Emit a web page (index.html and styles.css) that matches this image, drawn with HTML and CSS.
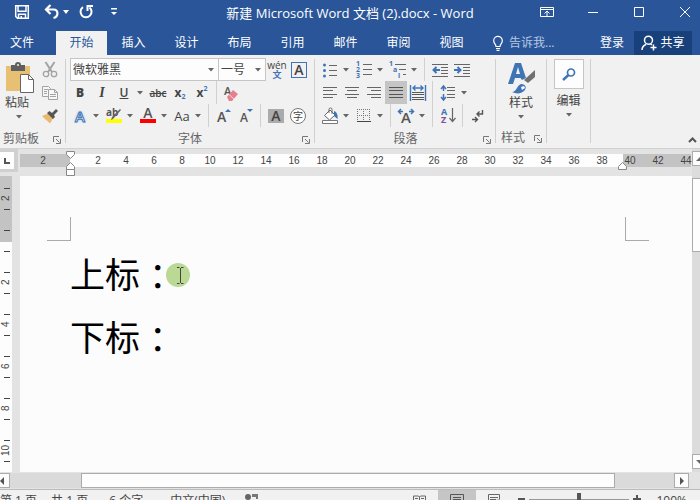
FILE: index.html
```html
<!DOCTYPE html>
<html lang="zh-CN">
<head>
    <meta charset="UTF-8">
    <meta name="viewport" content="width=device-width, initial-scale=1.0">
    <title>新建 Microsoft Word 文档 (2).docx - Word</title>
    <link rel="stylesheet" href="styles.css">
</head>
<body>
    <div class="app">
        <header class="titlebar">
            <div class="quick-access">
                <button class="qat save" aria-label="保存"><svg width="16" height="16" viewBox="0 0 16 16"><path d="M1.700 1.700h12.600v12.600H3.500l-1.800-1.800z M4 1.700v5.500h8V1.700 M4.500 14.300v-4h7v4 M7.200 12v2" fill="none" stroke="#fff" stroke-width="1.500"/></svg></button>
                <button class="qat undo" aria-label="撤消"><svg width="16" height="16" viewBox="0 0 16 16"><path d="M6.500 1L2 5.500 6.500 10M2 5.500h7.500c5 0 5.500 7 0 8.500" fill="none" stroke="#fff" stroke-width="2.200"/></svg></button>
                <button class="qat qat-caret" aria-label="撤消列表"><svg width="6" height="4"><path d="M0 0h6L3 4z" fill="#fff"/></svg></button>
                <button class="qat redo" aria-label="重复"><svg width="16" height="16" viewBox="0 0 16 16"><path d="M5 3.200A5.500 5.500 0 1 0 11.500 3.500M9.500 7V2H15" fill="none" stroke="#fff" stroke-width="2"/></svg></button>
                <button class="qat more" aria-label="自定义快速访问工具栏"><svg width="6" height="8"><path d="M0 0h6v1.500H0zM0 4h6L3 7z" fill="#fff"/></svg></button>
            </div>
            <h1>新建 Microsoft Word 文档 (2).docx - Word</h1>
            <div class="window-buttons">
                <button aria-label="功能区显示选项"><svg width="14" height="10"><path d="M.5.5h13v9H.5zM.5 2.500h13M7 9V4M4.500 6.500L7 4l2.500 2.500" fill="none" stroke="#fff"/></svg></button>
                <button aria-label="最小化"><svg width="10" height="10"><path d="M0 5.500h10" stroke="#fff"/></svg></button>
                <button aria-label="最大化"><svg width="10" height="10"><path d="M.5.5h9v9h-9z" fill="none" stroke="#fff"/></svg></button>
                <button aria-label="关闭"><svg width="10" height="10"><path d="M0 0l10 10M10 0L0 10" stroke="#fff"/></svg></button>
            </div>
        </header>

        <nav class="tabs">
            <button class="tab file">文件</button>
            <button class="tab active">开始</button>
            <button class="tab">插入</button>
            <button class="tab">设计</button>
            <button class="tab">布局</button>
            <button class="tab">引用</button>
            <button class="tab">邮件</button>
            <button class="tab">审阅</button>
            <button class="tab">视图</button>
            <button class="tell-me"><svg width="10" height="15" viewBox="0 0 10 15"><path d="M3 10.500C3 8 .7 7.500.7 4.700a4.300 4.300 0 0 1 8.600 0C9.300 7.500 7 8 7 10.500zM3 12.500h4M3.500 14.300h3" fill="none" stroke="#fff" stroke-width="1.200"/></svg>告诉我...</button>
            <button class="login">登录</button>
            <button class="share"><svg width="16" height="16" viewBox="0 0 16 16"><path d="M1 15c0-3 1.500-4.500 4-5.500M7.500 1.200a4 4 0 1 1 0 8 4 4 0 0 1 0-8zM9.500 9l1.500 1M12.500 9.500v6M9.500 12.500h6" fill="none" stroke="#fff" stroke-width="1.500"/></svg>共享</button>
        </nav>

        <section class="ribbon">
            <div class="group clipboard">
                <div class="group-body">
                    <button class="big">
                        <svg width="30" height="32" viewBox="0 0 30 32"><path d="M1 4h24v25H1z" fill="#e8c074"/><path d="M6 3h4a3 3 0 0 1 6 0h4v6H6z" fill="#5f5f5f"/><circle cx="13" cy="3" r="1" fill="#f1f1f1"/><path d="M15.500 12.500h8l5 5v13h-13z" fill="#fff" stroke="#666"/><path d="M23.500 12.500v5h5" fill="none" stroke="#666"/></svg>
                        <span>粘贴</span>
                        <svg class="arrow" width="6" height="4"><path d="M0 0h6L3 3.500z"/></svg>
                    </button>
                    <div class="stack">
                        <button class="tool" aria-label="剪切"><svg width="16" height="16" viewBox="0 0 16 16"><path d="M3.500 0L10 10M12.500 0L6 10" stroke="#a3a3a3" stroke-width="2"/><circle cx="4" cy="12" r="2.700" fill="none" stroke="#a3a3a3" stroke-width="1.300"/><circle cx="12" cy="12" r="2.700" fill="none" stroke="#a3a3a3" stroke-width="1.300"/></svg></button>
                        <button class="tool" aria-label="复制"><svg width="16" height="16" viewBox="0 0 16 16"><path d="M.5 1.500h6l2 2v8h-8z" fill="#f7f7f7" stroke="#a3a3a3"/><path d="M2 4.500h4M2 6.500h3M2 8.500h3" stroke="#a3a3a3"/><path d="M6.500 4.500h6l3 3v7h-9z" fill="#f7f7f7" stroke="#a3a3a3"/><path d="M12.500 4.500v3h3M8 9.500h6M8 11.500h6" fill="none" stroke="#a3a3a3"/></svg></button>
                        <button class="tool" aria-label="格式刷"><svg width="16" height="16" viewBox="0 0 16 16"><path d="M0 8l6-2.500 5 5L8 15.500 5.500 13 4 12z" fill="#e9b96e"/><path d="M5 5l2.500-2 2.500 2 4-4 2 2-4 4 1 2-2 2z" fill="#555"/></svg></button>
                    </div>
                </div>
                <div class="group-name"><span>剪贴板</span><button class="launcher" aria-label="剪贴板设置"><svg width="8" height="8"><path d="M.5 6V.5H6M3 3l3.500 3.500M7.500 3v4.500H3" fill="none" stroke="#777"/></svg></button></div>
            </div>
            <div class="line"></div>

            <div class="group font">
                <div class="row">
                    <div class="combo name">
                        <select aria-label="字体"><option>微软雅黑</option></select>
                        <svg class="arrow" width="6" height="4"><path d="M0 0h6L3 3.500z"/></svg>
                    </div>
                    <div class="combo size">
                        <select aria-label="字号"><option>一号</option></select>
                        <svg class="arrow" width="6" height="4"><path d="M0 0h6L3 3.500z"/></svg>
                    </div>
                    <button class="tool pinyin"><span>wén</span><b>文</b></button>
                    <button class="tool" aria-label="字符边框"><span class="boxed">A</span></button>
                </div>
                <div class="row">
                    <button class="tool"><b>B</b></button>
                    <button class="tool italic">I</button>
                    <button class="tool underline">U</button>
                    <button class="drop" aria-label="下划线样式"><svg class="arrow" width="6" height="4"><path d="M0 0h6L3 3.500z"/></svg></button>
                    <button class="tool strike">abc</button>
                    <button class="tool script">x<sub>2</sub></button>
                    <button class="tool script">x<sup>2</sup></button>
                    <i class="sep"></i>
                    <button class="tool" aria-label="清除格式"><svg width="16" height="16" viewBox="0 0 16 16"><text x="0" y="10" font-size="11" fill="#555">A</text><path d="M3 12l6-7 5 4-6 7H5z" fill="#e6808c"/><path d="M5 9.500l5 4.500" stroke="#f6d5d9"/></svg></button>
                </div>
                <div class="row">
                    <button class="tool" aria-label="文本效果"><span class="glow">A</span></button>
                    <button class="drop" aria-label="文本效果列表"><svg class="arrow" width="6" height="4"><path d="M0 0h6L3 3.500z"/></svg></button>
                    <button class="tool" aria-label="突出显示"><svg width="18" height="17" viewBox="0 0 18 17"><path d="M1 12h16v4H1z" fill="#ff0"/><text x="1" y="9" font-size="10" font-weight="bold" fill="#555">ab</text><path d="M16 3L8 12l-2 1 1-3 8-8z" fill="#666"/></svg></button>
                    <button class="drop" aria-label="突出显示颜色"><svg class="arrow" width="6" height="4"><path d="M0 0h6L3 3.500z"/></svg></button>
                    <button class="tool" aria-label="字体颜色"><svg width="16" height="17" viewBox="0 0 16 17"><path d="M0 12h16v4H0z" fill="#f00"/><text x="8" y="11" font-size="14" font-weight="600" text-anchor="middle" fill="#555">A</text></svg></button>
                    <button class="drop" aria-label="更多颜色"><svg class="arrow" width="6" height="4"><path d="M0 0h6L3 3.500z"/></svg></button>
                    <button class="tool case">Aa</button>
                    <button class="drop" aria-label="更改大小写"><svg class="arrow" width="6" height="4"><path d="M0 0h6L3 3.500z"/></svg></button>
                    <i class="sep"></i>
                    <button class="tool" aria-label="增大字号"><svg width="16" height="16" viewBox="0 0 16 16"><text x="1" y="14" font-size="14" font-weight="600" fill="#555">A</text><path d="M9 4l3-3 3 3z" fill="#3f74b5"/></svg></button>
                    <button class="tool" aria-label="减小字号"><svg width="16" height="16" viewBox="0 0 16 16"><text x="2" y="14" font-size="12" font-weight="600" fill="#555">A</text><path d="M9 1h6l-3 3z" fill="#3f74b5"/></svg></button>
                    <i class="sep"></i>
                    <button class="tool" aria-label="字符底纹"><span class="shaded">A</span></button>
                    <button class="tool" aria-label="带圈字符"><span class="ring">字</span></button>
                </div>
                <div class="group-name"><span>字体</span><button class="launcher" aria-label="字体设置"><svg width="8" height="8"><path d="M.5 6V.5H6M3 3l3.500 3.500M7.500 3v4.500H3" fill="none" stroke="#777"/></svg></button></div>
            </div>
            <div class="line"></div>

            <div class="group paragraph">
                <div class="row">
                    <button class="tool" aria-label="项目符号"><svg width="14" height="16"><path d="M6 3.500h8M6 8.500h8M6 13.500h8" stroke="#666"/><g fill="#3f74b5"><circle cx="1.500" cy="3" r="1.500"/><circle cx="1.500" cy="8.500" r="1.500"/><circle cx="1.500" cy="14" r="1.500"/></g></svg></button>
                    <button class="drop" aria-label="项目符号库"><svg class="arrow" width="6" height="4"><path d="M0 0h6L3 3.500z"/></svg></button>
                    <button class="tool" aria-label="编号"><svg width="16" height="17"><path d="M7 3.500h9M7 8.500h9M7 13.500h9" stroke="#666"/><g font-size="7" font-weight="bold" fill="#3f74b5"><text y="5">1</text><text y="11">2</text><text y="17">3</text></g></svg></button>
                    <button class="drop" aria-label="编号库"><svg class="arrow" width="6" height="4"><path d="M0 0h6L3 3.500z"/></svg></button>
                    <button class="tool" aria-label="多级列表"><svg width="18" height="17"><path d="M6 3.500h11M10 8.500h7M14 13.500h3" stroke="#666"/><g font-size="7" font-weight="bold" fill="#3f74b5"><text x="0" y="5">1</text><text x="4" y="11">a</text><text x="9" y="17">i</text></g></svg></button>
                    <button class="drop" aria-label="列表库"><svg class="arrow" width="6" height="4"><path d="M0 0h6L3 3.500z"/></svg></button>
                    <i class="sep"></i>
                    <button class="tool" aria-label="减少缩进量"><svg width="16" height="14"><path d="M0 1.500h16M9 4.500h7M9 7.500h7M9 10.500h7M0 13.500h16" stroke="#666"/><path d="M8 7H2M4.500 4L1.500 7l3 3" fill="none" stroke="#3f74b5" stroke-width="2"/></svg></button>
                    <button class="tool" aria-label="增加缩进量"><svg width="16" height="14"><path d="M0 1.500h16M9 4.500h7M9 7.500h7M9 10.500h7M0 13.500h16" stroke="#666"/><path d="M0 7h6M3.500 4l3 3-3 3" fill="none" stroke="#3f74b5" stroke-width="2"/></svg></button>
                </div>
                <div class="row">
                    <button class="tool" aria-label="左对齐"><svg width="14" height="11"><path d="M0 .5h14M0 3.500h10M0 7.500h14M0 10.500h10" stroke="#666"/></svg></button>
                    <button class="tool" aria-label="居中"><svg width="14" height="11"><path d="M0 .5h14M2 3.500h10M0 7.500h14M2 10.500h10" stroke="#666"/></svg></button>
                    <button class="tool" aria-label="右对齐"><svg width="14" height="11"><path d="M0 .5h14M4 3.500h10M0 7.500h14M4 10.500h10" stroke="#666"/></svg></button>
                    <button class="tool pressed" aria-label="两端对齐"><svg width="14" height="11"><path d="M0 .5h14M0 3.500h14M0 7.500h14M0 10.500h14" stroke="#555"/></svg></button>
                    <button class="tool" aria-label="分散对齐"><svg width="16" height="16"><path d="M.5 0v16M15.500 0v16M3 3h10M5.500.5L3 3l2.500 2.500M10.500.5L13 3l-2.500 2.500" fill="none" stroke="#3f74b5" stroke-width="1.400"/><path d="M2 7.500h12M2 9.500h12M2 12.500h12M2 14.500h12" stroke="#555"/></svg></button>
                    <i class="sep"></i>
                    <button class="tool" aria-label="行距"><svg width="15" height="16"><path d="M6 2.500h8M6 5.500h8M6 9.500h8M6 12.500h8" stroke="#666"/><path d="M2.500 1v5M0 4l2.500-3L5 4M2.500 9v6M0 12l2.500 3L5 12" fill="none" stroke="#3f74b5" stroke-width="1.500"/></svg></button>
                    <button class="drop" aria-label="行距选项"><svg class="arrow" width="6" height="4"><path d="M0 0h6L3 3.500z"/></svg></button>
                </div>
                <div class="row">
                    <button class="tool" aria-label="底纹"><svg width="16" height="16"><path d="M2.500 7.500L8 2l5 5-5.500 5zM7 5V1.500a1.500 1.500 0 0 1 3 0V6" fill="#fff" stroke="#666"/><path d="M12 3c3 1 4 4 3.500 8L12 8z" fill="#3f74b5"/><path d="M.5 12.500h15v3H.5z" fill="#fff" stroke="#777"/></svg></button>
                    <button class="drop" aria-label="底纹颜色"><svg class="arrow" width="6" height="4"><path d="M0 0h6L3 3.500z"/></svg></button>
                    <button class="tool" aria-label="边框"><svg width="14" height="14"><path d="M0 .5h14M0 6.500h14M.5 0v13M6.500 0v13M12.500 0v13" stroke="#777" stroke-dasharray="1 1"/><path d="M0 12.500h14" stroke="#444"/></svg></button>
                    <button class="drop" aria-label="边框选项"><svg class="arrow" width="6" height="4"><path d="M0 0h6L3 3.500z"/></svg></button>
                    <i class="sep"></i>
                    <button class="tool" aria-label="中文版式"><svg width="18" height="16"><text x="9" y="15" font-size="15" font-weight="600" text-anchor="middle" fill="#555">A</text><path d="M6 3.500H2M4 1L1.500 3.500 4 6M12 3.500h4M14 1l2.500 2.500L14 6" fill="none" stroke="#3f74b5" stroke-width="1.500"/></svg></button>
                    <button class="drop" aria-label="中文版式选项"><svg class="arrow" width="6" height="4"><path d="M0 0h6L3 3.500z"/></svg></button>
                    <i class="sep"></i>
                    <button class="tool" aria-label="排序"><svg width="15" height="17"><g font-size="9" font-weight="bold"><text y="8" fill="#3f74b5">A</text><text y="16" fill="#80519e">Z</text></g><path d="M11.500 1v13M8.500 11l3 3.500 3-3.500" fill="none" stroke="#666" stroke-width="1.200"/></svg></button>
                    <i class="sep"></i>
                    <button class="tool" aria-label="显示编辑标记"><svg width="12" height="14"><path d="M10.500 1v4H5M7.500 2.500L5 5l2.500 2.500M0 10.500h5M3 8l2.500 2.500L3 13" fill="none" stroke="#555" stroke-width="1.400"/></svg></button>
                </div>
                <div class="group-name"><span>段落</span><button class="launcher" aria-label="段落设置"><svg width="8" height="8"><path d="M.5 6V.5H6M3 3l3.500 3.500M7.500 3v4.500H3" fill="none" stroke="#777"/></svg></button></div>
            </div>
            <div class="line"></div>

            <div class="group styles">
                <div class="group-body">
                    <button class="big">
                        <svg width="30" height="32" viewBox="0 0 30 32"><path d="M2 22L9 1h6l5 15-4 2-1.500-2H9l-2 6zM10 12h4L12 5z" fill="#3f74b5" fill-rule="evenodd"/><path d="M29 8v7l-7 6-4-3z" fill="#707070"/><path d="M6 30c5 0 5-8 10-8 4 1 5 4 2 7-3 3-8 3-12 1z" fill="#3f74b5"/><path d="M15 25l3-1 1 2-3 2z" fill="#fff"/></svg>
                        <span>样式</span>
                        <svg class="arrow" width="6" height="4"><path d="M0 0h6L3 3.500z"/></svg>
                    </button>
                </div>
                <div class="group-name"><span>样式</span><button class="launcher" aria-label="样式设置"><svg width="8" height="8"><path d="M.5 6V.5H6M3 3l3.500 3.500M7.500 3v4.500H3" fill="none" stroke="#777"/></svg></button></div>
            </div>
            <div class="line"></div>

            <div class="group editing">
                <button class="big">
                    <span class="find"><svg width="14" height="13"><circle cx="9" cy="4.500" r="3.500" fill="none" stroke="#3f74b5" stroke-width="1.700"/><path d="M6.500 7L1 12" stroke="#3f74b5" stroke-width="2.400"/></svg></span>
                    <span>编辑</span>
                    <svg class="arrow" width="6" height="4"><path d="M0 0h6L3 3.500z"/></svg>
                </button>
            </div>
            <div class="line"></div>
            <button class="collapse" aria-label="折叠功能区"><svg width="9" height="6"><path d="M1 5l3.500-3.500L8 5" fill="none" stroke="#555" stroke-width="2"/></svg></button>
        </section>

        <div class="workspace">
            <div class="corner"><button aria-label="制表符"><svg width="6" height="6"><path d="M1 0v5h5" fill="none" stroke="#555" stroke-width="2"/></svg></button></div>
            <div class="ruler">
                <div class="outside left"><span>2</span></div>
                <div class="inside">
                    <span>2</span><span>4</span><span>6</span><span>8</span><span>10</span><span>12</span><span>14</span><span>16</span><span>18</span><span>20</span><span>22</span><span>24</span><span>26</span><span>28</span><span>30</span><span>32</span><span>34</span><span>36</span><span>38</span>
                    <svg class="indent first" width="9" height="25"><path d="M.5.5h8v3l-4 4-4-4zM4.500 11.500l4 4v3h-8v-3zM.5 18.500h8v6h-8z" fill="#fff" stroke="#888"/></svg>
                    <svg class="indent last" width="9" height="8"><path d="M4.500.5l4 4v3h-8v-3z" fill="#fff" stroke="#888"/></svg>
                </div>
                <div class="outside right"><span>40</span><span>42</span><span>44</span></div>
            </div>
            <div class="vruler">
                <div class="margin"><span>2</span><span></span><span></span></div>
                <div class="body"><span></span><span>2</span><span></span><span>4</span><span></span><span>6</span><span></span><span>8</span><span></span><span>10</span><span></span></div>
            </div>
            <main class="page">
                <div class="marks"><i class="mark-left"></i><i class="mark-right"></i></div>
                <div class="text">
                    <p>上标<span class="colon">：</span></p>
                    <p>下标<span class="colon">：</span></p>
                </div>
                <svg class="pointer" width="24" height="24"><circle cx="12" cy="12" r="12" fill="#b9d995"/><path d="M11 4.500h2.500M15 4.500h2.500M14.500 5v15M11 20.500h2.500M15 20.500h2.500" fill="none" stroke="#444"/></svg>
            </main>
            <div class="vscroll">
                <button aria-label="向上滚动"><svg width="8" height="4"><path d="M0 4l4-4 4 4z" fill="#666"/></svg></button>
                <div class="vtrack"><div class="thumb"></div></div>
                <button class="down" aria-label="向下滚动"><svg width="8" height="4"><path d="M0 0h8L4 4z" fill="#666"/></svg></button>
            </div>
        </div>

        <div class="hscroll">
            <button class="scroll-left" aria-label="向左滚动"><svg width="4" height="8"><path d="M4 0v8L0 4z" fill="#555"/></svg></button>
            <div class="htrack"><div class="thumb"></div></div>
            <button aria-label="向右滚动"><svg width="4" height="8"><path d="M0 0v8l4-4z" fill="#555"/></svg></button>
        </div>

        <footer class="status">
            <span>第 1 页</span>
            <span>共 1 页</span>
            <span class="words">6 个字</span>
            <span class="lang">中文(中国)</span>
            <svg width="14" height="14"><circle cx="3" cy="3" r="3" fill="#666"/><path d="M7 0h6v5h-2V3H7zM5 6h6v7H5z" fill="#777"/></svg>
            <div class="views">
                <button aria-label="阅读视图"><svg width="13" height="12"><path d="M.5 1h5l1 1 1-1h5v10H.5zM6.500 2v9M2 3.500h3M2 5.500h3M2 7.500h3M8 3.500h3M8 5.500h3M8 7.500h3" fill="none" stroke="#666"/></svg></button>
                <button class="pressed" aria-label="页面视图"><svg width="14" height="13"><path d="M.5.5h13v12H.5zM3 3.500h8M3 5.500h8M3 7.500h8M3 9.500h8" fill="none" stroke="#555"/></svg></button>
                <button aria-label="Web 版式视图"><svg width="14" height="13"><path d="M7 12.500H.5V.5h11v5M2 3.500h8M2 5.500h6M2 7.500h4" fill="none" stroke="#666"/><circle cx="10" cy="9" r="3.500" fill="#777"/></svg></button>
            </div>
            <div class="zoom">
                <button aria-label="缩小"><svg width="7" height="8"><path d="M0 4h7" stroke="#555" stroke-width="2"/></svg></button>
                <input type="range" min="0" max="100" value="50" aria-label="显示比例">
                <button aria-label="放大"><svg width="8" height="8"><path d="M0 4h8M4 0v8" stroke="#555" stroke-width="2"/></svg></button>
                <span>100%</span>
            </div>
        </footer>
    </div>
</body>
</html>
```
FILE: styles.css
```css
:root {
    --word-blue: #2a5699;
    --accent: #3f74b5;
    --ribbon-bg: #f1f1f1;
    --text: #444;
    --border: #ababab;
}

* {
    box-sizing: border-box;
}

body {
    margin: 0;
    overflow: hidden;
    font-family: "Open Sans", "Noto Sans CJK SC", sans-serif;
    font-size: 12px;
    line-height: 16px;
    color: var(--text);
}

/* the status bar runs past the bottom edge of the window */
.app {
    display: flex;
    flex-direction: column;
    height: calc(100vh + 11px);
    background: #e3e3e3;
}

button {
    display: flex;
    align-items: center;
    justify-content: center;
    padding: 0;
    border: none;
    background: none;
    font: inherit;
    color: inherit;
}

svg {
    flex: none;
    overflow: visible;
}

.arrow {
    fill: #666;
}

/* title bar */
.titlebar {
    display: grid;
    grid-template-columns: 1fr auto 1fr;
    height: 31px;
    padding-bottom: 8px;
    background: var(--word-blue);
    color: #fff;
}

.titlebar h1 {
    margin: 0;
    padding-top: 5px;
    font-size: 13px;
    font-weight: normal;
}

.quick-access,
.window-buttons {
    display: flex;
}

.quick-access {
    padding-left: 14px;
}

.qat {
    width: 16px;
    margin-right: 14px;
}

.qat.undo {
    margin-right: 0;
}

.qat.qat-caret {
    width: 12px;
    margin-right: 6px;
}

.qat.more {
    width: 12px;
}

.window-buttons {
    justify-content: flex-end;
    margin-right: -8px;
}

.window-buttons button {
    width: 46px;
}

/* tabs */
.tabs {
    display: flex;
    height: 24px;
    background: var(--word-blue);
    color: #fff;
}

.tab {
    width: 53px;
}

.tab.file {
    width: 56px;
    padding-right: 12px;
}

.tab.active {
    width: 51px;
    background: var(--ribbon-bg);
    color: var(--word-blue);
}

.tell-me {
    gap: 6px;
    margin: 0 auto 0 15px;
    color: #b8c9e3;
}

.login {
    margin-right: 10px;
}

.share {
    width: 58px;
    gap: 3px;
    margin-right: 8px;
    background: #18407a;
}

/* ribbon */
.ribbon {
    display: flex;
    height: 94px;
    border-bottom: 1px solid #d2d2d2;
    background: var(--ribbon-bg);
}

.line {
    width: 1px;
    margin: 4px 0 5px;
    background: #d0d0d0;
}

.group {
    display: flex;
    flex-direction: column;
    padding: 3px 3px 0;
}

.clipboard {
    width: 65px;
}

.font {
    width: 248px;
}

.paragraph {
    width: 180px;
    padding-left: 4px;
}

.styles {
    width: 50px;
}

.editing {
    width: 43px;
}

.group-body {
    display: flex;
    height: 69px;
}

.row {
    display: flex;
    height: 23px;
}

.tool {
    width: 22px;
    height: 23px;
    font-weight: 600;
    color: #444;
}

.drop {
    width: 12px;
    padding-right: 2px;
}

.pressed {
    background: #c5c5c5;
}

.sep {
    width: 1px;
    margin: 0 4px 0 3px;
    background: #d0d0d0;
}

.big {
    flex-direction: column;
    justify-content: flex-start;
    padding-top: 4px;
}

.big span {
    margin: 1px 0 4px;
}

.clipboard .big {
    width: 32px;
    align-items: flex-start;
    padding-left: 2px;
}

.clipboard .big .arrow {
    margin-left: 11px;
}

.clipboard .stack {
    margin-left: 4px;
}

.styles .big {
    width: 44px;
}

.editing .big {
    padding-top: 1px;
}

.big .find {
    display: flex;
    align-items: center;
    justify-content: center;
    width: 30px;
    height: 30px;
    margin: 0 0 3px;
    border: 1px solid #c6c6c6;
    background: #fdfdfd;
}

.group-name {
    display: grid;
    grid-template-columns: 1fr auto 1fr;
    align-items: center;
    height: 23px;
    padding-top: 3px;
    color: #666;
}

.group-name span {
    grid-column: 2;
}

.clipboard .group-name,
.styles .group-name {
    grid-template-columns: 0 auto 1fr;
}

.styles .group-name {
    padding-left: 2px;
}

.launcher {
    justify-self: end;
    padding: 1px 1px 0 0;
}

.collapse {
    margin: auto 3px 5px auto;
}

/* font group */
.combo {
    display: grid;
    align-items: center;
    height: 23px;
    border: 1px solid #c6c6c6;
    background: #fdfdfd;
}

.combo select,
.combo .arrow {
    grid-area: 1 / 1;
}

.combo select {
    appearance: none;
    width: 100%;
    padding: 0 2px;
    border: none;
    background: none;
    font: inherit;
    color: inherit;
}

.combo .arrow {
    justify-self: end;
    margin-right: 4px;
    pointer-events: none;
}

.combo.name {
    width: 149px;
    margin-left: 1px;
}

.combo.size {
    width: 47px;
    border-left: none;
}

.pinyin {
    flex-direction: column;
    font-size: 10px;
    font-weight: normal;
    line-height: 9px;
}

.pinyin b {
    font-size: 9px;
    color: var(--accent);
}

.boxed,
.shaded {
    width: 16px;
    height: 16px;
    font-size: 14px;
    line-height: 14px;
}

.boxed {
    border: 1px solid var(--accent);
}

.shaded {
    height: 14px;
    background: #ababab;
}

.italic {
    font-family: "Liberation Serif", serif;
    font-size: 14px;
    font-style: italic;
}

.underline {
    text-decoration: underline;
}

.strike {
    font-size: 10px;
    text-decoration: line-through;
}

.script {
    font-weight: bold;
}

.script sub,
.script sup {
    font-size: 7px;
    line-height: 7px;
    color: var(--accent);
}

.script sub {
    align-self: flex-end;
    margin-bottom: 4px;
}

.script sup {
    align-self: flex-start;
    margin-top: 4px;
}

.glow {
    font-size: 15px;
    color: #fff;
    -webkit-text-stroke: 1px var(--accent);
    text-shadow: 0 0 3px #8db4e2;
}

.case {
    font-size: 13px;
    font-weight: normal;
}

.ring {
    flex: none;
    width: 16px;
    height: 16px;
    border: 1px solid #777;
    border-radius: 50%;
    background: #fff;
    font-size: 10px;
    font-weight: normal;
    line-height: 14px;
}

/* rulers and page */
.workspace {
    flex: 1;
    display: grid;
    grid-template: 27px 1fr / 20px 1fr 8px;
    min-height: 0;
}

.corner {
    display: flex;
    align-items: flex-start;
    height: 23px;
    margin-right: 2px;
    padding-top: 3px;
    background: #d0d0d0;
}

.corner button {
    width: 14px;
    height: 17px;
    background: #fdfdfd;
}

.ruler {
    display: flex;
    height: 13px;
    margin-top: 5px;
    margin-right: 1px;
    font: 10px/13px "Liberation Sans", sans-serif;
}

.ruler div {
    display: flex;
    gap: 14px;
}

.ruler span {
    display: flex;
    flex: none;
    justify-content: center;
    width: 14px;
}

.ruler .outside {
    background: #c3c3c3;
}

.ruler .left {
    width: 50px;
    padding-left: 16px;
}

.ruler .inside {
    position: relative;
    flex: 1;
    min-width: 0;
    padding-left: 21px;
    background: #fdfdfd;
}

.ruler .right {
    width: 68px;
}

.indent {
    position: absolute;
}

.indent.first {
    top: -3px;
    left: -4px;
}

.indent.last {
    top: 8px;
    right: -4px;
}

.vruler {
    display: flex;
    flex-direction: column;
    width: 12px;
    overflow: hidden;
    font: 10px/12px "Liberation Sans", sans-serif;
}

.vruler .margin {
    padding-top: 12px;
    height: 66px;
    background: #c3c3c3;
}

.vruler .body {
    flex: 1;
    padding-top: 9px;
    background: #fdfdfd;
}

/* turned so that the digits read upwards; the tick is the lower border */
.vruler span {
    position: relative;
    display: flex;
    align-items: center;
    justify-content: center;
    width: 12px;
    height: 21px;
    writing-mode: vertical-rl;
    transform: rotate(180deg);
}

.vruler span::after {
    content: "";
    position: absolute;
    bottom: 0;
    left: 2px;
    width: 6px;
    height: 1px;
    background: #444;
}

.page {
    position: relative;
    overflow: hidden;
    padding: 41px 43px 0 27px;
    background: #fcfcfc;
}

.marks {
    display: flex;
    justify-content: space-between;
}

.marks i {
    width: 24px;
    height: 24px;
    border: 0 solid #aaa;
    border-bottom-width: 1px;
}

.marks .mark-left {
    border-right-width: 1px;
}

.marks .mark-right {
    border-left-width: 1px;
}

.text {
    padding: 0 24px 0 23px;
    font-family: "Noto Sans CJK SC", sans-serif;
    font-size: 35px;
    line-height: 63px;
    color: #000;
}

.text p {
    margin: 0;
}

.colon {
    padding-left: 9px;
}

.pointer {
    position: absolute;
    top: 87px;
    left: 146px;
}

/* scroll bars */
.vscroll {
    grid-area: 1 / 3 / 3 / 4;
    display: flex;
    flex-direction: column;
    overflow: hidden;
    padding: 2px 0 3px;
    background: #dcdcdc;
}

.vscroll button {
    flex: none;
    width: 16px;
    height: 15px;
    border: 1px solid var(--border);
    background: #fdfdfd;
}

.vtrack {
    flex: 1;
    padding-top: 12px;
}

.vtrack .thumb {
    width: 16px;
    height: 74px;
    border: 1px solid var(--border);
    background: #fdfdfd;
}

.hscroll {
    display: flex;
    flex: none;
    height: 17px;
    padding: 1px 11px 1px 0;
    background: #e3e3e3;
}

.hscroll button {
    width: 15px;
    border: 1px solid var(--border);
    background: #fdfdfd;
}

.hscroll .scroll-left {
    width: 10px;
    padding-right: 5px;
    border-left: none;
}

.htrack {
    flex: 1;
    padding: 0 59px 0 71px;
    background: #dadada;
}

.htrack .thumb {
    height: 15px;
    border: 1px solid var(--border);
    background: #fdfdfd;
}

/* status bar */
.status {
    display: flex;
    flex: none;
    align-items: center;
    height: 22px;
    padding-right: 13px;
    border-top: 1px solid #bbb;
    background: var(--ribbon-bg);
}

.status > span {
    margin-right: 14px;
}

.status .words {
    margin: 0 27px 0 7px;
}

.status .lang {
    margin-right: 20px;
}

.views {
    display: flex;
    align-self: stretch;
    margin-left: auto;
}

.views button {
    width: 38px;
}

.zoom {
    display: flex;
    align-items: center;
    gap: 4px;
    margin-left: 4px;
}

.zoom button,
.zoom input {
    margin: 0 0 3px;
}

.zoom span {
    margin-left: 11px;
}

.zoom input {
    appearance: none;
    width: 100px;
    height: 12px;
    background: linear-gradient(#999, #999) center / 100% 1px no-repeat;
}

.zoom input::-webkit-slider-thumb {
    appearance: none;
    width: 4px;
    height: 12px;
    background: #555;
}
```
